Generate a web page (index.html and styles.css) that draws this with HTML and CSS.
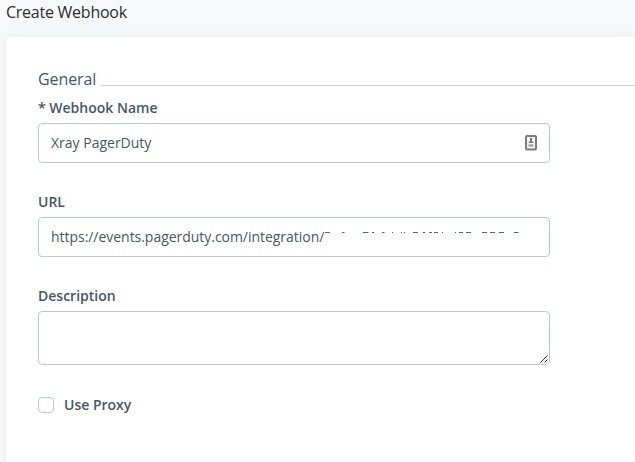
FILE: index.html
```html
<!DOCTYPE html>
<html lang="en">
<head>
<meta charset="utf-8">
<title>Create Webhook</title>
<link rel="stylesheet" href="styles.css">
</head>
<body>
<h1 class="title">Create Webhook</h1>
<main class="card">
  <h2 class="section">General</h2>
  <div class="field">
    <div class="label required">* Webhook Name</div>
    <div class="input"><span>Xray PagerDuty</span>
      <svg class="contact" width="12" height="16" viewBox="0 0 12 16"><rect x="1" y="1" width="10" height="13.500" rx="1" fill="#f2f2f2" stroke="#7d7d7d" stroke-width="2"/><path d="M6 3v3" stroke="#777" stroke-width="2"/><path d="M3.500 8q0-2 2.500-2t2.500 2z" fill="#777"/><path d="M3.500 10.500h5" stroke="#999" stroke-width="2"/></svg>
    </div>
  </div>
  <div class="field">
    <div class="label">URL</div>
    <div class="input"><span class="url">https://events.pagerduty.com/integration/</span><svg class="masked" width="200" height="20" viewBox="325 227 200 20"><path d="M326 232.500h5M343 232.500h2.500M364 232.500h5.500M373 232.500h2M383 232.500h2.500M393 232.500h1M402 232.500h1M405 232.500h1M414 232.500h5M424 232.500h2M430 232.500h3M435 232.500h4M443 232.500h1M456 232.500h1M460 232.500h4M467 232.500h5M483 232.500h5M491 232.500h5M500 232.500h5M515 232.500h4.500"/></svg></div>
  </div>
  <div class="field">
    <div class="label">Description</div>
    <div class="input area"><svg class="grip" width="8" height="8" viewBox="0 0 8 8"><path d="M.5 7.500l7-7M4.500 7.500l3-3"/></svg></div>
  </div>
  <div class="check"><span class="box"></span><span class="label">Use Proxy</span></div>
</main>
</body>
</html>
```

FILE: styles.css
```css
* { box-sizing: border-box; }
body {
  margin: 0;
  height: 462px;
  overflow: hidden;
  background: #f7f8fa;
  color: #495669;
  font: 14px/20px "Open Sans", sans-serif;
}
.title {
  margin: 0;
  height: 37px;
  padding-left: 6px;
  color: #2d2d2d;
  font-size: 16px;
  font-weight: 400;
  line-height: 24px;
  letter-spacing: -.25px;
}
.card {
  height: 440px;
  margin-left: 6px;
  padding: 30px 0 0 32px;
  border-radius: 4px 0 0 0;
  background: #fff;
  box-shadow: 0 0 12px rgba(0, 0, 0, .05);
}
.section {
  display: flex;
  margin: 0;
  height: 31px;
  font-size: 16px;
  font-weight: 400;
  line-height: 24px;
  letter-spacing: -.1px;
}
.section::after {
  content: "";
  flex: 1;
  height: 1px;
  margin: 18px 0 0 5px;
  background: #d3d5d8;
}
.field { width: 512px; margin-bottom: 29px; }
.label { font-weight: 600; line-height: 20px; }
.input {
  display: flex;
  align-items: center;
  height: 40px;
  margin-top: 5px;
  padding: 0 12px;
  border: 1px solid #bdc7dc;
  border-radius: 4px;
}
.contact { margin-left: auto; }
.url { letter-spacing: -.035px; }
.masked { fill: none; stroke: #5b6778; stroke-width: 1; }
.area { height: 54px; align-items: flex-end; justify-content: flex-end; padding: 0 1px 1px; }
.grip { fill: none; stroke: #444; stroke-width: 1; }
.check { display: flex; align-items: center; gap: 10px; height: 22px; }
.box { width: 16px; height: 16px; border: 1px solid #bdc7dc; border-radius: 4px; }
```
